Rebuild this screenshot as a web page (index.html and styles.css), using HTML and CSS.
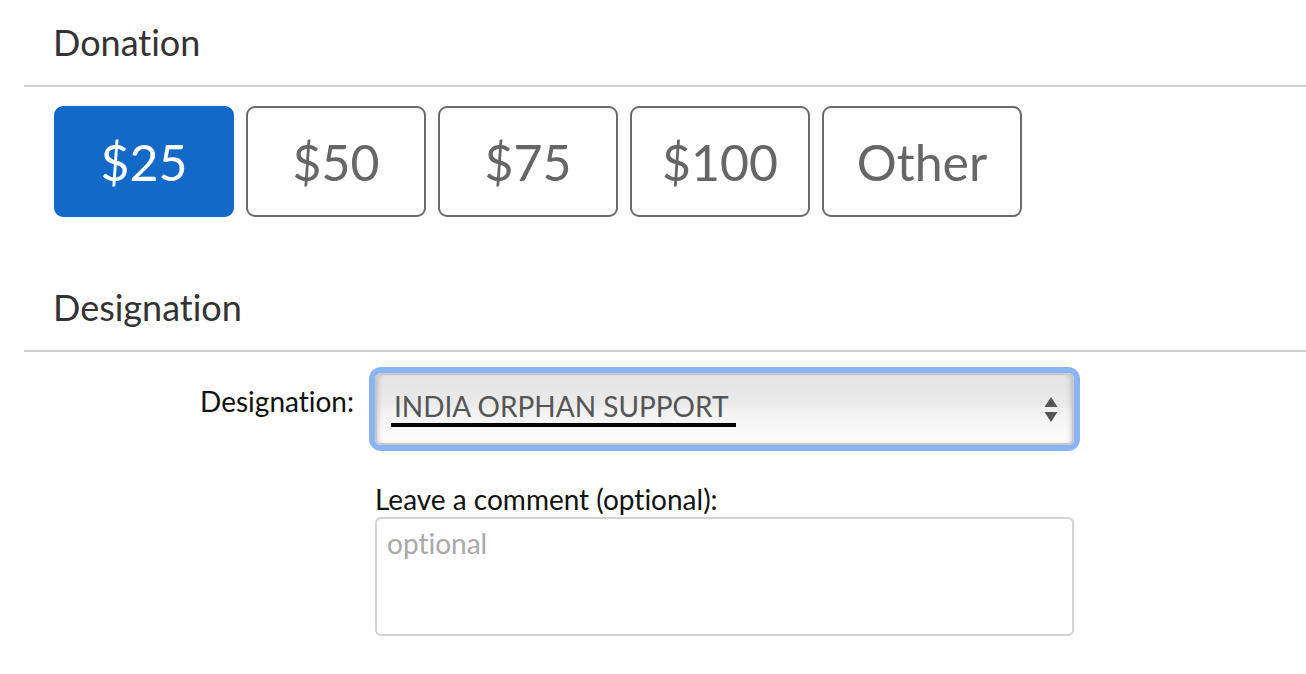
FILE: index.html
```html
<!DOCTYPE html>
<html>
  <head>
    <title>Donation</title>
    <link rel="stylesheet" href="styles.css">
  </head>

  <body>
    <section class="section">
      <h2 class="section-title">Donation</h2>

      <div class="amounts">
        <button class="amount selected">$25</button>
        <button class="amount">$50</button>
        <button class="amount">$75</button>
        <button class="amount">$100</button>
        <button class="amount other">Other</button>
      </div>
    </section>

    <section class="section designation">
      <h2 class="section-title">Designation</h2>

      <div class="designation-form">
        <label class="field-label" for="designation-select">Designation:</label>
        <div class="select" id="designation-select" role="listbox" tabindex="0">
          <span class="select-value">INDIA ORPHAN SUPPORT</span>
          <svg class="select-arrows" width="14" height="25" viewBox="0 0 14 25">
            <path d="M7 0 L13.5 10 L0.5 10 Z" fill="#555" />
            <path d="M0.5 15 L13.5 15 L7 25 Z" fill="#555" />
          </svg>
        </div>

        <div class="comment-group">
          <label for="comment-entry">Leave a comment (optional):</label>
          <textarea id="comment-entry" placeholder="optional"></textarea>
        </div>
      </div>
    </section>
  </body>
</html>
```

FILE: styles.css
```css
body {
  font-family: Lato, "Open Sans", sans-serif;
  font-variant-ligatures: none;
  margin: 0;
  background: #fff;
  color: #111;
}

.section-title {
  margin: 0 0 0 24px;
  padding: 20px 0 21px 29px;
  font-size: 36px;
  line-height: 44px;
  font-weight: normal;
  color: #333;
  border-bottom: 2px solid #cfcfcf;
}

.amounts {
  display: flex;
  gap: 12px;
  margin-top: 19px;
  padding-left: 54px;
}

.amount {
  box-sizing: border-box;
  width: 180px;
  height: 111px;
  border: 2px solid #6a6a6a;
  border-radius: 9px;
  background: #fff;
  color: #666;
  font-family: Lato, sans-serif;
  font-size: 50px;
  font-variant-ligatures: none;
  cursor: pointer;
}

.amount.other {
  width: 200px;
}

.amount.selected {
  background-color: #1269c7;
  border-color: #1269c7;
  color: #fff;
}

.designation {
  margin-top: 48px;
}

.designation-form {
  display: grid;
  grid-template-columns: 354px 699px;
  column-gap: 21px;
  row-gap: 38px;
  margin-top: 21px;
}

.field-label {
  align-self: start;
  padding-top: 12px;
  text-align: right;
  font-size: 28px;
  line-height: 32px;
}

.select {
  box-sizing: border-box;
  height: 72px;
  display: flex;
  align-items: center;
  justify-content: space-between;
  padding: 0 14px 0 14px;
  border: 2px solid #c8c8c8;
  border-radius: 6px;
  background: linear-gradient(#e3e3e3 0%, #ebebeb 47%, #f1f1f1 50%, #fdfdfd 100%);
  box-shadow: 0 0 0 6px #89b5f7, inset 4px 0 5px -3px rgba(0, 0, 0, 0.18),
    inset -4px 0 5px -3px rgba(0, 0, 0, 0.18);
}

.select-value {
  display: inline-block;
  padding: 0 8px 2px 3px;
  font-size: 28px;
  line-height: 30px;
  color: #555;
  border-bottom: 4px solid #000;
}

.comment-group {
  grid-column: 2;
}

.comment-group label {
  display: block;
  font-size: 28px;
  line-height: 32px;
  margin-bottom: 2px;
}

textarea {
  display: block;
  box-sizing: border-box;
  width: 699px;
  height: 119px;
  padding: 8px 10px;
  border: 2px solid #d2d2d2;
  border-radius: 6px;
  font-family: Lato, sans-serif;
  font-size: 28px;
  line-height: 32px;
  font-variant-ligatures: none;
  resize: none;
}

textarea::placeholder {
  color: #a9a9a9;
}
```
